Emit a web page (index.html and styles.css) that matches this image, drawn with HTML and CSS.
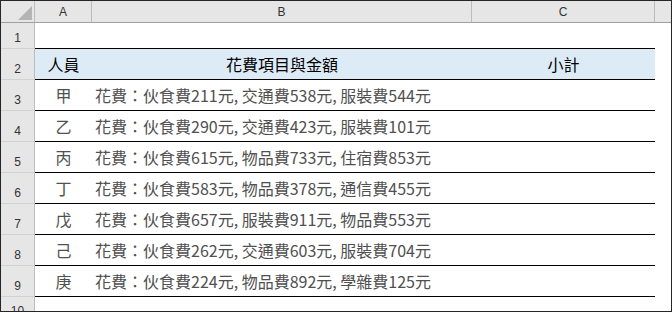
FILE: index.html
```html
<!DOCTYPE html>
<html lang="zh-Hant">
<head>
<meta charset="utf-8">
<link rel="stylesheet" href="styles.css">
</head>
<body>
<div class="sheet">
  <div class="corner"><span class="tri"></span></div>
  <div class="colhead">A</div>
  <div class="colhead">B</div>
  <div class="colhead">C</div>
  <div class="colhead last"></div>

  <div class="rowhead r-first">1</div>
  <div class="cell blank edge"></div>
  <div class="cell blank edge"></div>
  <div class="cell blank edge"></div>
  <div class="cell tail r-first"></div>

  <div class="rowhead r-title">2</div>
  <div class="cell title center edge">人員</div>
  <div class="cell title center edge">花費項目與金額</div>
  <div class="cell title center edge">小計</div>
  <div class="cell tail r-title"></div>

  <div class="rowhead">3</div>
  <div class="cell data center edge">甲</div>
  <div class="cell data edge">花費：伙食費211元, 交通費538元, 服裝費544元</div>
  <div class="cell data edge"></div>
  <div class="cell tail"></div>

  <div class="rowhead">4</div>
  <div class="cell data center edge">乙</div>
  <div class="cell data edge">花費：伙食費290元, 交通費423元, 服裝費101元</div>
  <div class="cell data edge"></div>
  <div class="cell tail"></div>

  <div class="rowhead">5</div>
  <div class="cell data center edge">丙</div>
  <div class="cell data edge">花費：伙食費615元, 物品費733元, 住宿費853元</div>
  <div class="cell data edge"></div>
  <div class="cell tail"></div>

  <div class="rowhead">6</div>
  <div class="cell data center edge">丁</div>
  <div class="cell data edge">花費：伙食費583元, 物品費378元, 通信費455元</div>
  <div class="cell data edge"></div>
  <div class="cell tail"></div>

  <div class="rowhead">7</div>
  <div class="cell data center edge">戊</div>
  <div class="cell data edge">花費：伙食費657元, 服裝費911元, 物品費553元</div>
  <div class="cell data edge"></div>
  <div class="cell tail"></div>

  <div class="rowhead">8</div>
  <div class="cell data center edge">己</div>
  <div class="cell data edge">花費：伙食費262元, 交通費603元, 服裝費704元</div>
  <div class="cell data edge"></div>
  <div class="cell tail"></div>

  <div class="rowhead">9</div>
  <div class="cell data center edge">庚</div>
  <div class="cell data edge">花費：伙食費224元, 物品費892元, 學雜費125元</div>
  <div class="cell data edge"></div>
  <div class="cell tail"></div>

  <div class="rowhead r-last">10</div>
  <div class="cell blank"></div>
  <div class="cell blank"></div>
  <div class="cell blank"></div>
  <div class="cell tail"></div>
</div>
</body>
</html>
```

FILE: styles.css
```css
* { box-sizing: border-box; }
html, body { margin: 0; padding: 0; background: #fff; }

.sheet {
  width: 672px;
  height: 312px;
  border: 1px solid #262626;
  display: grid;
  grid-template-columns: 34px 57px 380px 183px 16px;
  grid-template-rows: 22px 26px 31px 31px 31px 31px 31px 31px 31px 31px 14px;
  overflow: hidden;
  background: #fff;
}

.corner {
  background: #e6e6e6;
  border-right: 1px solid #bcbcbc;
  border-bottom: 1px solid #9f9f9f;
  position: relative;
}
.tri {
  position: absolute;
  right: 2px;
  bottom: 2px;
  width: 14px;
  height: 14px;
  background: #b4b4b4;
  clip-path: polygon(100% 0, 100% 100%, 0 100%);
}

.colhead {
  background: #e6e6e6;
  border-right: 1px solid #bcbcbc;
  border-bottom: 1px solid #9f9f9f;
  font-family: "Liberation Sans", Arial, sans-serif;
  font-size: 12px;
  color: #333;
  display: flex;
  align-items: center;
  justify-content: center;
  padding-top: 1px;
}
.colhead.last { border-right: 0; }

.rowhead {
  background: #e6e6e6;
  border-right: 1px solid #bcbcbc;
  border-bottom: 1px solid #d2d2d2;
  font-family: "Liberation Sans", Arial, sans-serif;
  font-size: 12px;
  color: #333;
  display: flex;
  align-items: flex-end;
  justify-content: center;
  padding-bottom: 3px;
  line-height: 14px;
  overflow: hidden;
}
.rowhead.r-last {
  border-bottom: 0;
  padding-bottom: 0;
  align-items: flex-start;
  padding-top: 7px;
}

.cell {
  font-family: "Noto Sans CJK TC", "Noto Sans CJK SC", sans-serif;
  font-size: 16px;
  display: flex;
  align-items: center;
  white-space: nowrap;
  padding-left: 3px;
}
.cell.edge { border-bottom: 1px solid #000; }
.cell.center { justify-content: center; padding-left: 0; }
.cell.title { background: #ddebf7; color: #000; }
.cell.data { color: #505050; }
.cell.tail { background: #fff; }
```
